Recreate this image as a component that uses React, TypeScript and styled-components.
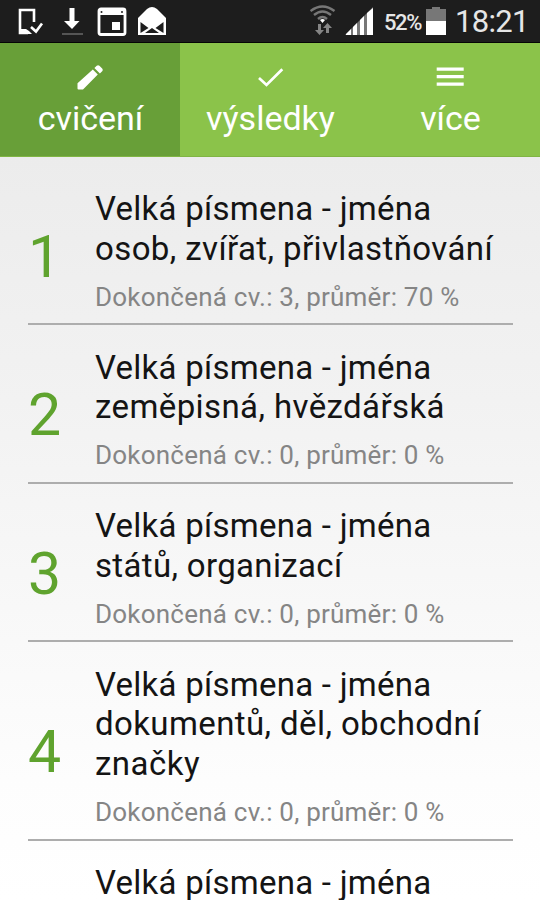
import React from "react";
import styled, { createGlobalStyle } from "styled-components";

const GlobalStyle = createGlobalStyle`
  * { box-sizing: border-box; }
  body { margin: 0; font-family: Roboto, sans-serif; background: #fff; }
`;

const Screen = styled.div`
  width: 540px;
  height: 900px;
  overflow: hidden;
  display: flex;
  flex-direction: column;
  background: linear-gradient(#ececec 157px, #f2f2f2 400px, #fdfdfd 780px, #fff);
`;

const StatusBar = styled.header`
  flex: none;
  height: 43px;
  display: flex;
  justify-content: space-between;
  background: #1d1d1d;
  border-bottom: 1px solid #050505;
  color: #e6e6e6;
`;

const StatusGroup = styled.div`
  display: flex;
`;

const Percent = styled.span`
  width: 41px;
  padding-left: 1px;
  font-size: 22px;
  font-weight: 500;
  line-height: 46px;
  letter-spacing: -1.4px;
  white-space: nowrap;
`;

const Clock = styled.time`
  width: 91px;
  padding-left: 6px;
  font-size: 31px;
  line-height: 43px;
  letter-spacing: -0.7px;
  white-space: nowrap;
`;

const Tabs = styled.nav`
  flex: none;
  height: 114px;
  display: grid;
  grid-template-columns: repeat(3, 1fr);
  border-bottom: 1px solid #80b544;
`;

const Tab = styled.button<{ $active?: boolean }>`
  border: 0;
  padding: 18px 0 0;
  display: flex;
  flex-direction: column;
  align-items: center;
  background: ${(p) => (p.$active ? "#689f38" : "#8bc34a")};
  color: #fff;
  font-family: inherit;
`;

const TabLabel = styled.span`
  margin-top: 3px;
  padding-left: 1px;
  font-size: 34px;
  line-height: 40px;
`;

const List = styled.main`
  padding: 9.500px 27px 0 28px;
`;

const Row = styled.article`
  display: grid;
  grid-template-columns: 67px 1fr;
  padding: 22.5px 0 7px;
  border-bottom: 2px solid #adadad;
`;

const Index = styled.div`
  align-self: center;
  padding-top: 8px;
  font-size: 59px;
  line-height: 70px;
  letter-spacing: -1px;
  color: #5fa32e;
`;

const Title = styled.h2`
  margin: 0;
  font-weight: 400;
  font-size: 33px;
  line-height: 39.7px;
  color: #141414;
`;

const Line = styled.span<{ $spacing: number }>`
  display: block;
  white-space: nowrap;
  letter-spacing: ${(p) => p.$spacing}px;
`;

const Summary = styled.p`
  margin: 10.2px 0 0;
  font-size: 26px;
  line-height: 37.5px;
  letter-spacing: 0.22px;
  color: #858585;
  white-space: nowrap;
`;

const LeftIcons = () => (
  <svg width="180" height="42" viewBox="0 0 180 42" fill="none" stroke="#fff">
    <path d="M34 22V10H20v23h8" strokeWidth="2.6" />
    <path d="M19 29h7l3 2 3 3H19z" fill="#fff" stroke="none" />
    <path d="M31 27l5 4.500 6-8" strokeWidth="2.600" />
    <path d="M69.500 8h5v13h5L72 29l-8-8h5.500z" fill="#fff" stroke="none" />
    <path d="M62 34h21" stroke="#555" strokeWidth="2" />
    <rect x="99" y="9" width="26" height="25.500" rx="2" strokeWidth="2.800" />
    <path d="M99 9h26v6H99z" fill="#fff" stroke="none" />
    <circle cx="101.500" cy="12" r="1" fill="#222" stroke="none" />
    <circle cx="122" cy="12" r="1" fill="#222" stroke="none" />
    <rect x="112" y="22" width="8" height="8" fill="#fff" stroke="none" />
    <path d="M138 18l9-9q5-4 10 0l9 9v17h-28z" fill="#fff" stroke="none" />
    <path d="M140.500 22l8 6-8 5zM163.500 22l-8 6 8 5zM145 33l7-5 7 5z" fill="#1d1d1d" stroke="none" />
  </svg>
);

const SignalIcons = () => (
  <svg width="73" height="42" viewBox="0 0 73 42" fill="none">
    <g stroke="#777" strokeWidth="2.400">
      <path d="M0.500 11q12-9 24 0M4 15q8.500-7 17 0M8 19q4.500-4 9 0" />
    </g>
    <path d="M10 20q2.500-2 5 0l-2.500 3z" fill="#fff" />
    <path d="M8 24h3v6h3l-4.500 5L5 30h3zM16 33h3v-5h3l-4.500-5-4.500 5h3z" fill="#858585" />
    <path d="M35 35L63 7v28z" fill="#777" />
    <path d="M36 34l5-5v6h-5zM43 27l4-4v12h-4zM50 20l4-4v19h-4zM57 13l6-5v27h-6z" fill="#fff" />
  </svg>
);

const Battery = () => (
  <svg width="25" height="42" viewBox="0 0 25 42">
    <path d="M2 9h6V7h8v2h6v12H2z" fill="#777" />
    <path d="M2 21h20v14H2z" fill="#fff" />
  </svg>
);

const Pencil = () => (
  <svg width="36" height="34" viewBox="0 0 36 34" fill="#fff">
    <path d="M5.500 27.500v-5.200L20.800 8.600l5 5L11.500 28q-.5.500-1.200.5H6.500q-1 0-1-1zM22.400 7l2.300-2.200q1.400-1.200 2.700 0l2.800 2.800q1.300 1.400 0 2.700l-2.300 2.100z" />
  </svg>
);

const Check = () => (
  <svg width="36" height="34" viewBox="0 0 36 34" fill="none" stroke="#fff" strokeWidth="2.700">
    <path d="M7 17l7.500 7L30.300 8.300" />
  </svg>
);

const Menu = () => (
  <svg width="36" height="34" viewBox="0 0 36 34" fill="#fff">
    <path d="M4.700 6.500h27v3.200h-27zM4.700 14h27v3.200h-27zM4.700 21.500h27v3.200h-27z" />
  </svg>
);

const tabs = [
  { label: "cvičení", icon: <Pencil /> },
  { label: "výsledky", icon: <Check /> },
  { label: "více", icon: <Menu /> },
];

type Exercise = { lines: { text: string; spacing: number }[]; summary: string };

const first = { text: "Velká písmena - jména", spacing: 0.26 };
const untouched = "Dokončená cv.: 0, průměr: 0 %";
const exercises: Exercise[] = [
  { lines: [first, { text: "osob, zvířat, přivlastňování", spacing: 0.4 }], summary: "Dokončená cv.: 3, průměr: 70 %" },
  { lines: [first, { text: "zeměpisná, hvězdářská", spacing: 0.4 }], summary: untouched },
  { lines: [first, { text: "států, organizací", spacing: 0.34 }], summary: untouched },
  { lines: [first, { text: "dokumentů, děl, obchodní", spacing: 0.4 }, { text: "značky", spacing: 0.5 }], summary: untouched },
];

export default function App() {
  return (
    <>
      <GlobalStyle />
      <Screen>
        <StatusBar>
          <LeftIcons />
          <StatusGroup>
            <SignalIcons />
            <Percent>52%</Percent>
            <Battery />
            <Clock>18:21</Clock>
          </StatusGroup>
        </StatusBar>
        <Tabs>
          {tabs.map((tab, i) => (
            <Tab key={tab.label} $active={i === 0}>
              {tab.icon}
              <TabLabel>{tab.label}</TabLabel>
            </Tab>
          ))}
        </Tabs>
        <List>
          {exercises.map((exercise, i) => (
            <Row key={i}>
              <Index>{i + 1}</Index>
              <div>
                <Title>
                  {exercise.lines.map((line) => (
                    <Line key={line.text} $spacing={line.spacing}>{line.text}</Line>
                  ))}
                </Title>
                <Summary>{exercise.summary}</Summary>
              </div>
            </Row>
          ))}
          <Row>
            <span />
            <Title>
              <Line $spacing={first.spacing}>{first.text}</Line>
            </Title>
          </Row>
        </List>
      </Screen>
    </>
  );
}
